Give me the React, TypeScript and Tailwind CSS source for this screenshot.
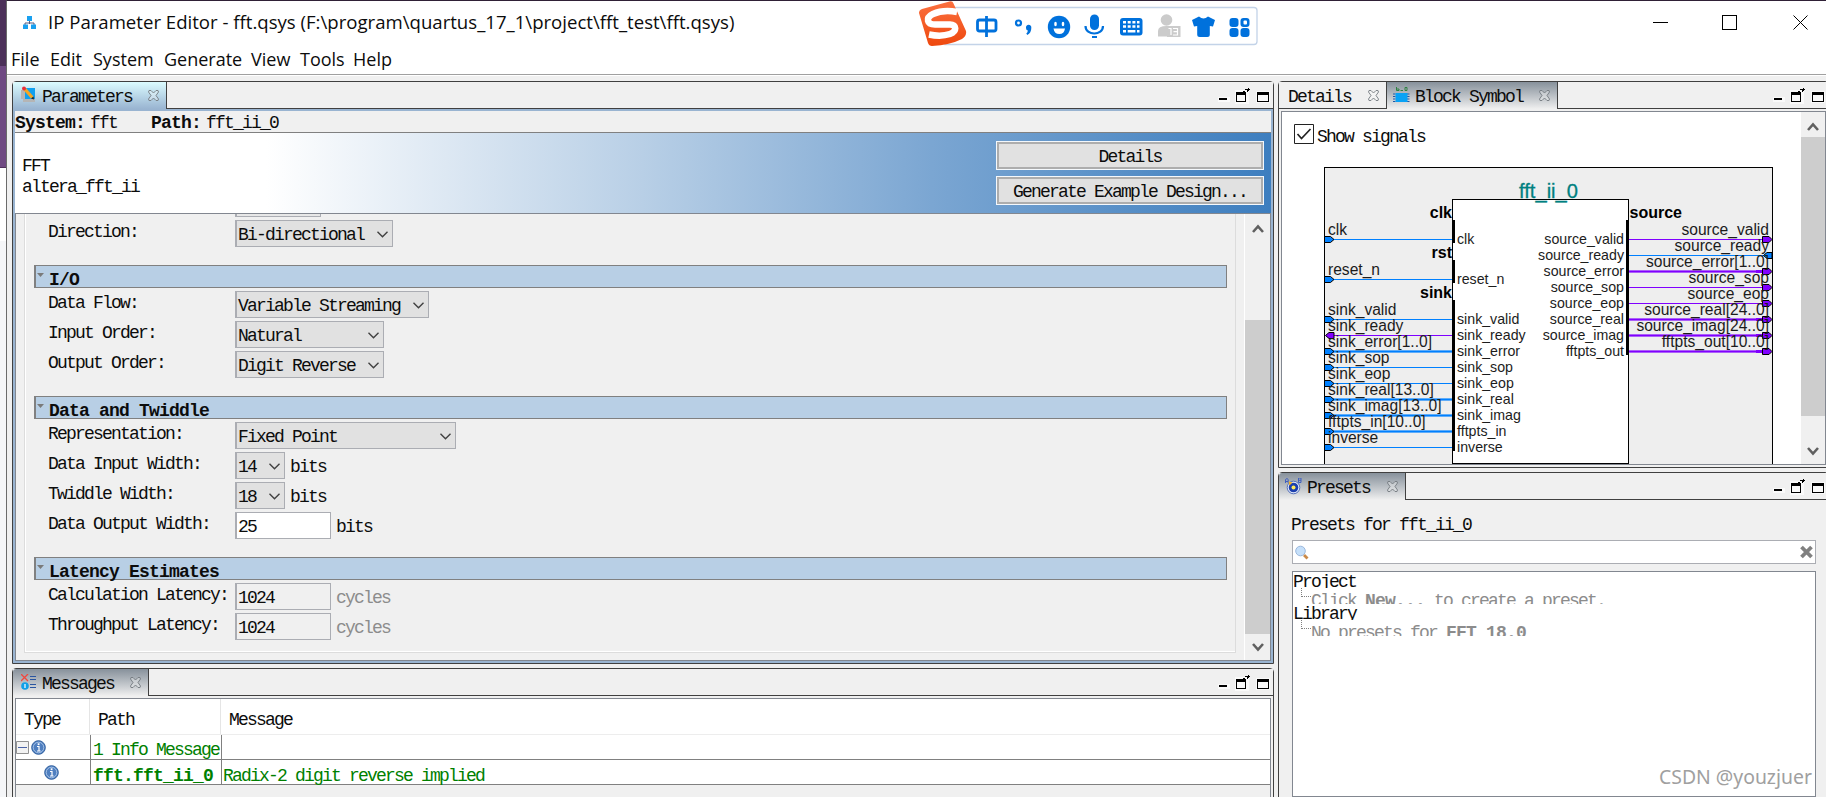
import type { ReactNode } from 'react'

interface TabProps {
  label: string
  icon?: ReactNode
  tone: 'blue' | 'gray' | 'idle'
  className: string
}

interface Pin {
  name: string
  outer: string
  y: number
  bus?: boolean
  back?: boolean
}

const mono = "font-['Liberation_Mono',monospace] text-[18px] leading-[18px] tracking-[-1.8px] whitespace-pre"
const monoBold = "font-['Liberation_Mono',monospace] text-[18px] leading-[18px] tracking-[-0.8px] font-bold whitespace-pre"

const toneClass = {
  blue: 'bg-linear-to-b from-[#dcfcff] to-[#99b4d1]',
  gray: 'bg-linear-to-b from-[#87919b] to-[#f0f0f0]',
  idle: 'border-b border-b-[#404040]',
}

const leftPins: Pin[] = [
  { name: 'clk', outer: 'clk', y: 239 },
  { name: 'reset_n', outer: 'reset_n', y: 279 },
  { name: 'sink_valid', outer: 'sink_valid', y: 319 },
  { name: 'sink_ready', outer: 'sink_ready', y: 335, back: true },
  { name: 'sink_error', outer: 'sink_error[1..0]', y: 351, bus: true },
  { name: 'sink_sop', outer: 'sink_sop', y: 367 },
  { name: 'sink_eop', outer: 'sink_eop', y: 383 },
  { name: 'sink_real', outer: 'sink_real[13..0]', y: 399, bus: true },
  { name: 'sink_imag', outer: 'sink_imag[13..0]', y: 415, bus: true },
  { name: 'fftpts_in', outer: 'fftpts_in[10..0]', y: 431, bus: true },
  { name: 'inverse', outer: 'inverse', y: 447 },
]

const rightPins: Pin[] = [
  { name: 'source_valid', outer: 'source_valid', y: 239 },
  { name: 'source_ready', outer: 'source_ready', y: 255, back: true },
  { name: 'source_error', outer: 'source_error[1..0]', y: 271, bus: true },
  { name: 'source_sop', outer: 'source_sop', y: 287 },
  { name: 'source_eop', outer: 'source_eop', y: 303 },
  { name: 'source_real', outer: 'source_real[24..0]', y: 319, bus: true },
  { name: 'source_imag', outer: 'source_imag[24..0]', y: 335, bus: true },
  { name: 'fftpts_out', outer: 'fftpts_out[10..0]', y: 351, bus: true },
]

function CloseIcon() {
  return (
    <svg width="11" height="11" viewBox="0 0 11 11" className="shrink-0" fill="none" stroke="#747a80" strokeWidth=".9">
      <path d="M1 .5h2L5.500 3 8 .5h2l.5 1.500L8 5.500l2.500 3.500-.5 1.500H8L5.500 8 3 10.500H1L.5 9 3 5.500.5 2z" fill="#fff" fillOpacity=".3" />
    </svg>
  )
}

function Tab({ label, icon, tone, className }: TabProps) {
  return (
    <div className={`flex h-[27px] shrink-0 border-r border-r-[#404040] pr-[7px] ${toneClass[tone]} ${className}`}>
      {icon}
      <span className={`${mono} pt-[6px]`}>{label}</span>
      <span className="ml-auto pt-[8px]"><CloseIcon /></span>
    </div>
  )
}

function PanelControls() {
  return (
    <svg width="52" height="16" viewBox="0 0 52 16" className="mt-[6px] mr-[3px]" shapeRendering="crispEdges">
      <path d="M0 9h12v5H0zM17 2h14v14H17zM38 3h14v12H38z" fill="#fafafa" />
      <path d="M1 10h8v2H1z" />
      <path d="M18 4h10v10H18zM19 7v6h8V7z" fillRule="evenodd" />
      <path d="M25 3h2V1h3v-1h1v1h1v1h-1v1h-1v1h-1V2h-2v2h-2z" />
      <path d="M39 4h12v10H39zM40 7v6h10V7z" fillRule="evenodd" />
    </svg>
  )
}

function PanelHeader({ children }: { children: ReactNode }) {
  return (
    <div className="flex h-[27px] shrink-0 bg-[#f0f0f0]">
      {children}
      <div className="flex flex-1 justify-end border-b border-[#404040]">
        <PanelControls />
      </div>
    </div>
  )
}

function ScrollBar({ thumb, className }: { thumb: string; className: string }) {
  return (
    <div className={`flex shrink-0 flex-col items-center bg-[#f0f0f0] ${className}`}>
      <div className="flex h-[25px] items-center">
        <svg width="12" height="10" viewBox="0 0 12 10" className="mt-1" fill="none" stroke="#606060" strokeWidth="2.600"><path d="M1 8l5-5.500L11 8" /></svg>
      </div>
      <div className={`w-full bg-[#cdcdcd] ${thumb}`} />
      <div className="mt-auto flex h-[26px] items-center">
        <svg width="12" height="10" viewBox="0 0 12 10" fill="none" stroke="#606060" strokeWidth="2.600"><path d="M1 2l5 5.500L11 2" /></svg>
      </div>
    </div>
  )
}

function Section({ title }: { title: string }) {
  return (
    <div className="mr-[8px] ml-[9px] flex h-[23px] border border-l-2 border-[#808080] bg-[#b8cfe5]">
      <svg width="7" height="4" viewBox="0 0 7 4" className="mt-[7px] ml-px"><path d="M0 0h7L3.500 4z" fill="#7a7a7a" /></svg>
      <span className={`${monoBold} ml-[5px] pt-[5px]`}>{title}</span>
    </div>
  )
}

function Row({ label, children }: { label: string; children: ReactNode }) {
  return (
    <div className="flex h-[27px] pl-[24px]">
      <span className={`${mono} -ml-px w-[187px] shrink-0 pt-[3px]`}>{label}</span>
      {children}
    </div>
  )
}

function Select({ value, className }: { value: string; className: string }) {
  return (
    <div className={`flex h-[27px] border border-l-2 border-[#abadb3] bg-[#e1e1e1] pr-[4px] pl-px ${className}`}>
      <span className={`${mono} pt-[5px]`}>{value}</span>
      <svg width="11" height="7" viewBox="0 0 11 7" className="mt-[10px] ml-auto shrink-0" fill="none" stroke="#404040" strokeWidth="1.400"><path d="M.5.7l5 5 5-5" /></svg>
    </div>
  )
}

function Field({ value, readOnly }: { value: string; readOnly?: boolean }) {
  return (
    <div className={`h-[27px] w-[96px] border border-l-2 border-[#abadb3] pl-px ${readOnly ? 'bg-[#f0f0f0]' : 'bg-white'}`}>
      <div className={`${mono} pt-[5px]`}>{value}</div>
    </div>
  )
}

function Unit({ children, muted }: { children: string; muted?: boolean }) {
  return <span className={`${mono} ml-[5px] pt-[6px] ${muted ? 'text-[#8c8c8c]' : ''}`}>{children}</span>
}

function InfoIcon() {
  return (
    <svg width="15" height="15" viewBox="0 0 15 15">
      <circle cx="7.500" cy="7.500" r="6.800" fill="#4f7fc0" stroke="#2f5f9f" />
      <circle cx="7.500" cy="7.500" r="5.300" fill="none" stroke="#b9d0ee" strokeWidth=".8" />
      <path d="M6 6.500h2V11M6 11h3.600" stroke="#fff" strokeWidth="1.200" fill="none" />
      <path d="M6.700 3.300h1.800v1.800H6.700z" fill="#fff" />
    </svg>
  )
}

function ImeBar() {
  return (
    <svg width="340" height="48" viewBox="918 1 340 48" className="block">
      <path d="M950 7.500h304a3 3 0 0 1 3 3v31a3 3 0 0 1-3 3H945z" fill="#fff" stroke="#c3d3e8" strokeWidth="1.300" />
      <defs>
        <linearGradient id="sogou" x1="0" y1="0" x2="0" y2="1">
          <stop offset="0" stopColor="#fb7040" />
          <stop offset="1" stopColor="#ee480e" />
        </linearGradient>
      </defs>
      <path d="M922 9L949.500 1.500q3-.8 4 2L966 31q1 5-4 8-12 6-30 7-3 0-4-3L919 13q0-3 3-4z" fill="url(#sogou)" />
      <path d="M957 12q-14-2.500-24 2c-8 4-6 10.500 2 10.500l15 0c7 0 7 7 0 9.500q-9 3-21 .5" fill="none" stroke="#fff" strokeWidth="6.500" />
      <g fill="none" stroke="#0071dc" strokeWidth="2.800">
        <rect x="977.500" y="20" width="18.500" height="11" rx="2" />
        <path d="M986.500 16v21" />
        <circle cx="1018.500" cy="23" r="2.500" strokeWidth="2.200" />
        <path d="M1085.500 26c0 10 17.500 10 17.500 0" strokeWidth="2.200" />
      </g>
      <g fill="#0071dc">
        <path d="M1026 28a2.700 2.700 0 1 1 5.300 0q0 5-4 7l-1-1.500q1.500-1 1.500-3-1.800-.5-1.800-2.500z" />
        <circle cx="1059" cy="27" r="11.200" />
        <rect x="1090" y="14.500" width="9" height="15.500" rx="4.500" />
        <path d="M1092 36h5v2h-5z" />
        <rect x="1120" y="18" width="22.500" height="17.500" rx="3" />
        <path d="M1192 20l7-3.500q4.500 4 9 0l7 3.500-2 6.500-3.200-.5v8.500q0 2.500-2.500 2.500h-7.600q-2.500 0-2.500-2.500V26l-3.200.5z" />
        <rect x="1229.500" y="18" width="9" height="9" rx="3" />
        <rect x="1240.500" y="18" width="9" height="9" rx="3" />
        <rect x="1229.500" y="28" width="9" height="9" rx="3" />
        <rect x="1240.500" y="28" width="9" height="9" rx="3" />
      </g>
      <g fill="#fff">
        <ellipse cx="1055.500" cy="24" rx="1.300" ry="2.300" />
        <ellipse cx="1063" cy="24" rx="1.300" ry="2.300" />
        <path d="M1053.500 28.500h11.500q-.8 5.500-5.700 5.500t-5.800-5.500z" />
        <path d="M1123 21h3v2.500h-3zM1127.700 21h3v2.500h-3zM1132.400 21h3v2.500h-3zM1137 21h2.500v2.500h-2.500zM1123 25.300h3v2.500h-3zM1127.700 25.300h3v2.500h-3zM1132.400 25.300h3v2.500h-3zM1137 25.300h2.500v2.500h-2.500zM1123 30h3v2.500h-3zM1127.700 30h7.700v2.500h-7.700zM1137 30h2.500v2.500h-2.500z" />
        <rect x="1243.500" y="20.500" width="3.500" height="4" rx="1" />
      </g>
      <g fill="#cbcbcb">
        <circle cx="1166.500" cy="20" r="5.800" />
        <path d="M1158 36.500V31q0-5 8.500-5 2 0 3.500.3v10.200z" />
        <path d="M1167 26h13.500v11H1167z" />
      </g>
      <path d="M1168.500 28.500h2.500V35M1173 28.500h4.500V35H1173M1173.500 31.700h4" stroke="#fff" strokeWidth="1.200" fill="none" />
    </svg>
  )
}

function BlockSymbol() {
  return (
    <svg width="452" height="297" viewBox="1323 167 452 297" className="block font-['Liberation_Sans',sans-serif]">
      <rect x="1324.500" y="167.500" width="448" height="320" fill="#eee" stroke="#000" />
      <rect x="1452.500" y="199.500" width="176" height="264" fill="#fff" stroke="#000" />
      <text x="1548.500" y="197.500" textAnchor="middle" fontSize="20" fill="#008080" stroke="#008080" strokeWidth=".3" textLength="59" lengthAdjust="spacingAndGlyphs">fft_ii_0</text>
      <path d="M1452 220h3v23h-3zM1452 260h3v23h-3zM1452 300h3v151h-3zM1626 220h3v135h-3z" />
      <g fontSize="16" fontWeight="bold">
        <text x="1452" y="218" textAnchor="end">clk</text>
        <text x="1452" y="258" textAnchor="end">rst</text>
        <text x="1452" y="298" textAnchor="end">sink</text>
        <text x="1629.500" y="218">source</text>
      </g>
      {leftPins.map((pin) => {
        const color = pin.back ? '#8000ff' : '#0080ff'
        return (
          <g key={pin.name} fill="#1c1c1c">
            {pin.bus && <path d={`M1331 ${pin.y + 0.5}H1452`} stroke={color} strokeOpacity=".6" strokeWidth="3" />}
            <path d={`M1331 ${pin.y + 0.5}H1452`} stroke={color} />
            <path
              d={pin.back
                ? `M1334 ${pin.y - 2.500}h-5l-3.500 3 3.500 3h5z`
                : `M1324.500 ${pin.y - 2.500}h6l3.500 3-3.500 3h-6z`}
              fill={color}
              stroke="#000"
            />
            <text x="1328" y={pin.y - 4.500} fontSize="15.600">{pin.outer}</text>
            <text x="1457" y={pin.y + 4.500} fontSize="14.200">{pin.name}</text>
          </g>
        )
      })}
      {rightPins.map((pin) => {
        const color = pin.back ? '#0080ff' : '#8000ff'
        return (
          <g key={pin.name} fill="#1c1c1c">
            {pin.bus && <path d={`M1629 ${pin.y + 0.5}H1764`} stroke={color} strokeOpacity=".6" strokeWidth="3" />}
            <path d={`M1629 ${pin.y + 0.5}H1764`} stroke={color} />
            {pin.bus && <path d={`M1756 ${pin.y + 0.5}h7`} stroke={color} strokeWidth="3" />}
            <path
              d={pin.back
                ? `M1772 ${pin.y - 2.500}h-5l-3.500 3 3.500 3h5z`
                : `M1762.500 ${pin.y - 2.500}h6.500l3 3-3 3h-6.500z`}
              fill={color}
              stroke="#000"
            />
            <text x="1769" y={pin.y - 4.500} fontSize="15.600" textAnchor="end">{pin.outer}</text>
            <text x="1624" y={pin.y + 4.500} fontSize="14.200" textAnchor="end">{pin.name}</text>
          </g>
        )
      })}
    </svg>
  )
}

function TitleBar() {
  return (
    <div className="h-[73px] shrink-0 bg-white font-['Open_Sans','Noto_Sans',sans-serif] text-[18px] leading-[24px]">
      <div className="flex h-[40px]">
        <svg width="15" height="15" viewBox="0 0 15 15" className="mt-[14px] ml-[15px] shrink-0">
          <path d="M7.500 6v3M3 10V8h9v2" fill="none" stroke="#555a80" />
          <path d="M5 1h5v5H5zM1 9.500h5V14H1zM9 9.500h5V14H9z" fill="#19a0f0" />
        </svg>
        <div className="mt-[9px] ml-[11px] w-[870px] whitespace-pre text-[18.6px]">
          {'IP Parameter Editor - fft.qsys (F:\\program\\quartus_17_1\\project\\fft_test\\fft.qsys)'}
        </div>
        <div className="h-[47px]"><ImeBar /></div>
        <svg width="156" height="16" viewBox="0 0 156 16" className="mt-[14px] ml-[395px] shrink-0" fill="none" stroke="#000" shapeRendering="crispEdges">
          <path d="M0 7.500h15M69.500.5h14v14h-14z" />
          <path d="M140.500.5l14 14M154.500.5l-14 14" shapeRendering="auto" />
        </svg>
      </div>
      <div className="flex pt-[6px] pl-[4px] whitespace-nowrap">
        <span className="w-[39px]">File</span>
        <span className="w-[43px]">Edit</span>
        <span className="w-[71px]">System</span>
        <span className="w-[87px]">Generate</span>
        <span className="w-[49px]">View</span>
        <span className="w-[53px]">Tools</span>
        <span>Help</span>
      </div>
    </div>
  )
}

function ParametersPanel() {
  return (
    <div className="flex h-[583px] shrink-0 flex-col rounded-t-[4px] border border-[#404040]">
      <PanelHeader>
        <Tab
          label="Parameters"
          tone="blue"
          className="w-[154px] rounded-tl-[3px]"
          icon={
            <svg width="16" height="17" viewBox="0 0 16 17" className="mt-[4px] mr-[5px] ml-[8px] shrink-0">
              <path d="M0 4h5v9H0zM2 13h12v3H2z" fill="#b5b5b5" />
              <path d="M4 2h10v11H4z" fill="#10a0f0" />
              <path d="M2.500 4l2.500-2 7.500 8.500-2.500 2z" fill="#f5a623" />
              <path d="M12.500 10.500l.5 3-3-1z" fill="#222" />
              <circle cx="3" cy="2.500" r="2" fill="#e8303a" />
            </svg>
          }
        />
      </PanelHeader>
      <div className="flex flex-1 flex-col bg-[#99b4d1] p-[2px]">
        <div className="flex h-[22px] border-b border-[#808080] bg-[#f0f0f0] pt-[3px]">
          <span className={monoBold}>System:</span>
          <span className={`${mono} ml-[5px] w-[61px]`}>fft</span>
          <span className={monoBold}>Path:</span>
          <span className={`${mono} ml-[5px]`}>fft_ii_0</span>
        </div>
        <div className="flex h-[80px] justify-between bg-[linear-gradient(90deg,#fff_0%,#fff_20%,#b8cfe6_50%,#7ba6d2_73%,#3d7ebf_100%)] pr-[7px]">
          <div className={`${mono} pt-[24px] pl-[7px]`}>
            <div className="h-[21px]">FFT</div>
            <div>altera_fft_ii</div>
          </div>
          <div className="flex w-[268px] flex-col gap-[6px] pt-[8px]">
            <button className={`${mono} h-[29px] border border-[#f4f8fc] bg-[#adadad] p-px`}>
              <span className="block h-full bg-[#e1e1e1] pt-[5px] outline outline-[#adadad] -outline-offset-1">Details</span>
            </button>
            <button className={`${mono} h-[29px] border border-[#f4f8fc] bg-[#adadad] p-px`}>
              <span className="block h-full bg-[#e1e1e1] pt-[5px] outline outline-[#adadad] -outline-offset-1">Generate Example Design...</span>
            </button>
          </div>
        </div>
        <div className="flex flex-1 border border-[#828790] bg-[#f0f0f0]">
          <div className="flex-1 pr-[8px] pb-[7px] pl-[8px]">
            <div className="h-full border-x border-b border-[#dcdcdc] shadow-[inset_1px_-1px_0_#fff]">
              <div className="ml-[210px] h-[3px] w-[86px] border border-t-0 border-l-2 border-[#abadb3] bg-[#e8e8e8]" />
              <div className="pt-[3px]">
                <Row label="Direction:"><Select value="Bi-directional" className="w-[158px]" /></Row>
              </div>
              <div className="flex flex-col gap-[3px] pt-[18px]">
                <Section title="I/O" />
                <Row label="Data Flow:"><Select value="Variable Streaming" className="w-[194px]" /></Row>
                <Row label="Input Order:"><Select value="Natural" className="w-[149px]" /></Row>
                <Row label="Output Order:"><Select value="Digit Reverse" className="w-[149px]" /></Row>
              </div>
              <div className="flex flex-col gap-[3px] pt-[18px]">
                <Section title="Data and Twiddle" />
                <Row label="Representation:"><Select value="Fixed Point" className="w-[221px]" /></Row>
                <Row label="Data Input Width:"><Select value="14" className="w-[50px]" /><Unit>bits</Unit></Row>
                <Row label="Twiddle Width:"><Select value="18" className="w-[50px]" /><Unit>bits</Unit></Row>
                <Row label="Data Output Width:"><Field value="25" /><Unit>bits</Unit></Row>
              </div>
              <div className="flex flex-col gap-[3px] pt-[18px]">
                <Section title="Latency Estimates" />
                <Row label="Calculation Latency:"><Field value="1024" readOnly /><Unit muted>cycles</Unit></Row>
                <Row label="Throughput Latency:"><Field value="1024" readOnly /><Unit muted>cycles</Unit></Row>
              </div>
            </div>
          </div>
          <ScrollBar className="w-[26px] border-l border-white" thumb="mt-[81px] h-[314px]" />
        </div>
      </div>
    </div>
  )
}

function MessagesPanel() {
  return (
    <div className="flex h-[140px] flex-col rounded-t-[4px] border border-[#404040]">
      <PanelHeader>
        <Tab
          label="Messages"
          tone="gray"
          className="w-[136px] rounded-tl-[3px]"
          icon={
            <svg width="16" height="17" viewBox="0 0 16 17" className="mt-[5px] mr-[5px] ml-[8px] shrink-0">
              <path d="M0 0l7 7M7 0L0 7" stroke="#f0483e" strokeWidth="1.300" />
              <path d="M9 2.500h6M9 5.500h6M9 10.500h6M9 13.500h6" stroke="#2a55a0" strokeWidth="1.200" />
              <circle cx="4" cy="12" r="3.800" fill="#10a0e8" />
              <path d="M4 10v4" stroke="#fff" strokeWidth="1.200" />
            </svg>
          }
        />
      </PanelHeader>
      <div className="flex flex-1 flex-col px-[2px] pt-[2px]">
        <div className="flex-1 border border-[#828790]">
          <div className={`${mono} flex h-[36px] border-b border-[#ededed] bg-white`}>
            <div className="w-[74px] border-r border-[#e5e5e5] pt-[12px] pl-[8px]">Type</div>
            <div className="w-[131px] border-r border-[#e5e5e5] pt-[12px] pl-[8px]">Path</div>
            <div className="pt-[12px] pl-[8px]">Message</div>
          </div>
          <div className={`${mono} flex h-[25px] border-b border-[#808080] bg-white text-[#008000]`}>
            <div className="flex w-[75px] items-center gap-[2px] border-r border-[#808080]">
              <svg width="13" height="13" viewBox="0 0 13 13"><path d="M.5.5h12v12H.5z" fill="#f2f2f2" stroke="#919191" /><path d="M2 6.500h9" stroke="#4b63a7" /></svg>
              <InfoIcon />
            </div>
            <div className="w-[131px] border-r border-[#808080] pt-[6px] pl-[2px]">1 Info Message</div>
          </div>
          <div className={`${mono} flex h-[25px] border-b border-[#808080] bg-white text-[#008000]`}>
            <div className="flex w-[75px] items-center border-r border-[#808080] pl-[28px]"><InfoIcon /></div>
            <div className={`${monoBold} w-[131px] border-r border-[#808080] pt-[7px] pl-[2px]`}>fft.fft_ii_0</div>
            <div className="pt-[7px] pl-px">Radix-2 digit reverse implied</div>
          </div>
        </div>
      </div>
    </div>
  )
}

function BlockSymbolPanel() {
  return (
    <div className="flex h-[387px] shrink-0 flex-col rounded-t-[4px] border border-[#404040]">
      <PanelHeader>
        <Tab label="Details" tone="idle" className="w-[108px] pl-[9px]" />
        <Tab
          label="Block Symbol"
          tone="gray"
          className="w-[171px]"
          icon={
            <svg width="17" height="17" viewBox="0 0 17 17" className="mt-[4px] mr-[5px] ml-[6px] shrink-0">
              <path d="M3.500 1v3.500H6V3H3.500M7.500 4.500H10M12 1.500h2v3h-2z" fill="none" stroke="#2c8040" />
              <path d="M0 8h16.500M0 10.500h16.500M0 13h16.500M0 15.500h16.500" stroke="#2058a8" strokeDasharray="2.500 11.500" />
              <path d="M2.500 7h12v9h-12z" fill="#08a2f5" />
            </svg>
          }
        />
      </PanelHeader>
      <div className="min-h-0 flex-1 p-[2px]">
        <div className="flex h-full overflow-hidden border border-[#828790] bg-white">
          <div className="flex-1">
            <div className="flex h-[55px] pt-[12px] pl-[12px]">
              <svg width="20" height="20" viewBox="0 0 20 20"><path d="M.5.5h19v19H.5z" fill="#fff" stroke="#222" /><path d="M3.500 10l4 4.500L16.500 5" fill="none" stroke="#222" strokeWidth="1.700" /></svg>
              <span className={`${mono} ml-[3px] pt-[4px]`}>Show signals</span>
            </div>
            <div className="pl-[41px]"><BlockSymbol /></div>
          </div>
          <ScrollBar className="w-[24px]" thumb="h-[279px]" />
        </div>
      </div>
    </div>
  )
}

function PresetsPanel() {
  return (
    <div className="relative flex h-[330px] flex-col rounded-t-[4px] border border-[#404040]">
      <PanelHeader>
        <Tab
          label="Presets"
          tone="gray"
          className="w-[127px] rounded-tl-[3px]"
          icon={
            <svg width="17" height="17" viewBox="0 0 17 17" className="mt-[5px] mr-[5px] ml-[6px] shrink-0">
              <path d="M.5 5V1.500L2 .5l1.200 1V5M.5 3.500h2.700M13.500 0v4.500H16V0zM13.500 2.300H16" fill="none" stroke="#3f5fc0" />
              <circle cx="8.500" cy="9.500" r="6.300" fill="#e8edf8" stroke="#5571bc" />
              <circle cx="8.500" cy="9.500" r="4.800" fill="#1c3fae" />
              <path d="M3.500 3.500l4 1-3 3z" fill="#f5b21c" />
              <circle cx="8.500" cy="9.500" r="2" fill="#ffe95a" />
            </svg>
          }
        />
      </PanelHeader>
      <div className="flex w-[537px] flex-col pl-[13px]">
        <div className={`${mono} -ml-px h-[40px] pt-[16px]`}>Presets for fft_ii_0</div>
        <div className="flex h-[24px] items-center justify-between border border-[#abadb3] bg-white px-[2px]">
          <svg width="14" height="15" viewBox="0 0 14 15"><path d="M9 10l3.500 3.500" stroke="#c98a4a" strokeWidth="2.800" /><circle cx="5.500" cy="6" r="4.800" fill="#c6e0fa" stroke="#9bb8dc" /></svg>
          <svg width="13" height="14" viewBox="0 0 13 14"><path d="M1.500 2l10 10M11.500 2l-10 10" stroke="#808080" strokeWidth="3.800" /></svg>
        </div>
        <div className="mt-[7px] h-[226px] border border-[#828790] bg-white">
          <div className={`${mono} h-[16px] overflow-hidden pt-px`}>Project</div>
          <div className={`${mono} flex h-[16px] overflow-hidden pl-[8px] text-[#8c8c8c]`}>
            <span className="h-[9px] w-[10px] shrink-0 border-b border-l border-dotted border-[#808080]" />
            <span className="pt-[4px]">Click <b className="tracking-[-0.8px]">New...</b> to create a preset.</span>
          </div>
          <div className={`${mono} h-[16px] overflow-hidden pt-px`}>Library</div>
          <div className={`${mono} flex h-[16px] overflow-hidden pl-[8px] text-[#8c8c8c]`}>
            <span className="h-[9px] w-[10px] shrink-0 border-b border-l border-dotted border-[#808080]" />
            <span className="pt-[4px]">No presets for <b className="tracking-[-0.8px]">FFT 18.0</b></span>
          </div>
        </div>
      </div>
      <div className="absolute top-[292px] left-[380px] font-['Noto_Sans',sans-serif] text-[19.4px] leading-[24px] whitespace-nowrap text-[#a0a0a0]">CSDN @youzjuer</div>
    </div>
  )
}

export default function App() {
  return (
    <div className="flex h-[797px] w-[1826px] overflow-hidden bg-[#f0f0f0] text-[#0c0c0c]">
      <div className="flex w-[6px] shrink-0 flex-col bg-[#f5f6f8]">
        <div className="h-[66px] bg-[#4c3059]" />
        <div className="h-[102px] border-b border-[#4c3059] bg-[#6f4982]" />
        <div className="h-[73px] bg-white" />
      </div>
      <div className="flex w-[1820px] shrink-0 flex-col border-t border-l border-t-[#2f2036] border-l-[#6b6b6b]">
        <TitleBar />
        <div className="h-[2px] shrink-0 border-t border-[#a0a0a0] bg-white" />
        <div className="flex gap-[4px] pt-[5px] pl-[5px]">
          <div className="flex w-[1262px] shrink-0 flex-col gap-[4px]">
            <ParametersPanel />
            <MessagesPanel />
          </div>
          <div className="flex w-[551px] shrink-0 flex-col gap-[4px]">
            <BlockSymbolPanel />
            <PresetsPanel />
          </div>
        </div>
      </div>
    </div>
  )
}
